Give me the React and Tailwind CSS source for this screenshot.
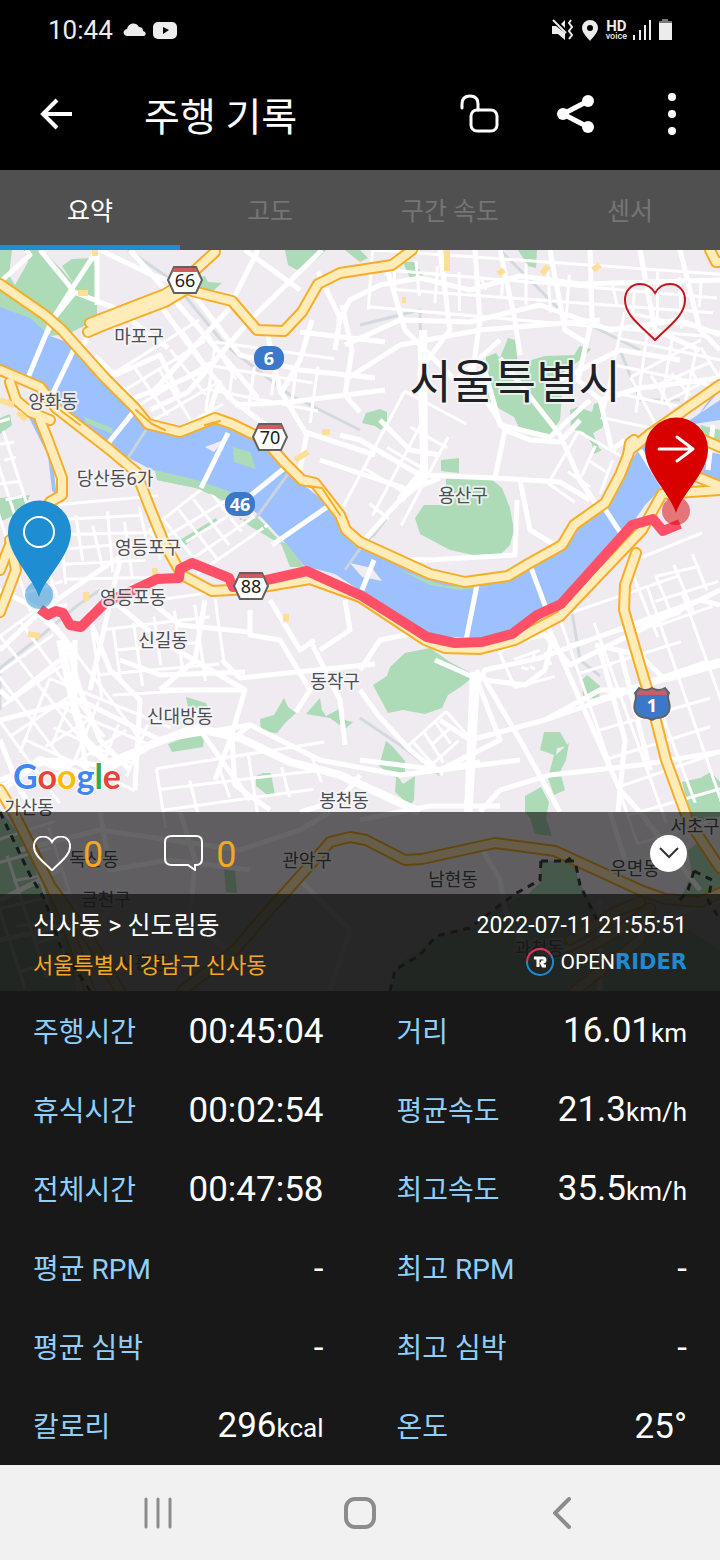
import { useState } from 'react';

const TABS = ['요약', '고도', '구간 속도', '센서'];

const STATS = [
  { label: '주행시간', value: '00:45:04' },
  { label: '거리', value: '16.01', unit: 'km' },
  { label: '휴식시간', value: '00:02:54' },
  { label: '평균속도', value: '21.3', unit: 'km/h' },
  { label: '전체시간', value: '00:47:58' },
  { label: '최고속도', value: '35.5', unit: 'km/h' },
  { label: '평균 RPM', value: '-' },
  { label: '최고 RPM', value: '-' },
  { label: '평균 심박', value: '-' },
  { label: '최고 심박', value: '-' },
  { label: '칼로리', value: '296', unit: 'kcal' },
  { label: '온도', value: '25°' },
];

const PLACES = [
  ['마포구', 139, 343],
  ['양화동', 53, 408],
  ['당산동6가', 115, 485],
  ['영등포구', 148, 554],
  ['영등포동', 133, 604],
  ['신길동', 163, 647],
  ['신대방동', 180, 723],
  ['동작구', 335, 688],
  ['봉천동', 344, 807],
  ['가산동', 29, 814],
  ['용산구', 463, 502],
  ['독산동', 94, 866],
  ['금천구', 106, 906],
  ['관악구', 307, 867],
  ['남현동', 453, 886],
  ['우면동', 635, 875],
  ['서초구', 695, 833],
  ['과천동', 539, 955],
  ['시흥동', 143, 969],
];

const PARKS = [
  'M0 250H12L9 275L15 285L28 262L24 250H42L62 270L76 286L97 292V318L84 326L68 334L50 336L0 310Z',
  'M62 266L72 259L92 258L97 270V296L76 287Z',
  'M192 279L205 276L208 282L222 283L214 290L200 291Z',
  'M285 250H326L318 258L305 268L297 270L288 265Z',
  'M345 250H360L368 258L360 262Z',
  'M403 262L414 262L423 275L415 281L409 276Z',
  'M518 250H537L536 268L528 266Z',
  'M486 357L496 353L500 358L508 338L515 340L518 364L545 356L574 355L580 346L591 349L580 360L564 372L560 420L548 437L520 430L514 417L498 408L486 400Z',
  'M570 410L578 407L592 412L594 404L600 402V410L606 417L602 428L593 433L599 448L602 450L594 454L592 444L584 432L571 429Z',
  'M362 423L366 413L380 409L387 412V421L381 430L375 426Z',
  'M441 460L459 458V473L441 471Z',
  'M446 478H490L502 488L510 508L514 530L510 545L500 555L482 557L450 550L420 534L415 518L424 505H446Z',
  'M373 685L387 676L390 667L405 653L430 648L450 662L475 675L462 686L448 695L442 708L425 714L403 710L388 713Z',
  'M582 680L587 675L600 686L599 700L583 696Z',
  'M544 732L560 732L568 746L557 748L556 755L569 743L566 760L560 772L565 790L554 795L548 778L554 755L540 750Z',
  'M525 796L541 787L549 802L546 818L552 836L535 834L530 818L525 812Z',
  'M386 741L392 746L405 761V775L396 774L403 784L415 776L414 800L410 806L395 792L396 778L379 766Z',
  'M682 782L700 778L711 772L720 782V816L700 832L690 812Z',
  'M260 719L274 715L284 698L288 707L296 713L286 722L277 733L261 732Z',
  'M306 714L320 698L322 710L326 716L341 708L345 720L353 722L345 729L330 718Z',
  'M186 697L206 703L210 712L200 708L188 707Z',
  'M168 744L205 730L203 747L172 752Z',
  'M256 776L263 773H271L275 795L266 794L256 786Z',
  'M155 470L196 478L234 493L240 520L258 518L280 541L270 538L248 525L222 500L196 488L157 480Z',
  'M180 540L216 518L218 523L184 546Z',
  'M0 418L10 414L12 425L0 434Z',
  'M0 498L30 495L24 510L0 522Z',
  'M280 541L290 545L304 567H290Z',
  'M700 425L720 430V443L704 436Z',
  'M0 810L22 838L52 880L72 940L76 991H0Z',
  'M224 868L235 870L237 893L226 892Z',
  'M539 861L574 860L578 880L600 920L690 930L720 950V991H390L398 965L430 942L440 934L480 926L498 906L528 894L541 882Z',
  'M692 874L688 850L705 838L720 862V895L682 896Z',
];

// local street grids: x, y, width, height, rotation, column step, row step
const GRIDS = [
  [112, 345, 120, 90, -32, 20, 20],
  [210, 350, 120, 70, 8, 21, 24],
  [370, 262, 350, 60, 4, 22, 19],
  [612, 322, 108, 110, 12, 26, 27],
  [0, 420, 40, 190, -18, 15, 19],
  [62, 500, 100, 80, -5, 16, 15],
  [160, 492, 100, 70, -38, 18, 16],
  [0, 620, 100, 170, -36, 25, 29],
  [95, 600, 130, 90, -8, 21, 22],
  [30, 700, 130, 80, 22, 27, 22],
  [160, 755, 170, 60, -9, 31, 21],
  [420, 720, 45, 50, 48, 15, 15],
  [595, 590, 125, 240, -19, 31, 30],
  [640, 545, 80, 80, -22, 21, 23],
  [505, 640, 50, 40, -24, 14, 13],
  [370, 400, 70, 130, 28, 30, 29],
  [560, 440, 50, 60, 30, 22, 20],
  [640, 355, 80, 60, -28, 19, 19],
  [0, 830, 80, 150, -18, 24, 22],
];

const STREETS = [
  'M0 282L30 255L26 250M40 250L68 284L74 292L115 308L150 335L168 348',
  'M97 250V305M52 320L75 284L96 252M75 292L54 318L30 370M92 330L54 396',
  'M100 250L150 274L172 282M130 250L190 318L235 370L258 398',
  'M160 305L200 360L232 400L286 440M190 290L240 355L300 370L375 378',
  'M258 250L228 310L150 395M322 250L250 320L188 392L150 410',
  'M245 250L300 290M318 272L340 318L335 350M268 336L280 390L305 432L375 455',
  'M280 395L300 360L312 320M235 405L290 402L385 390M200 440L220 380',
  'M95 356L115 375L160 355L180 398M128 400L170 385L205 370',
  'M300 332L385 342M342 305L352 350L345 395L360 412M307 432L300 470',
  'M338 322L350 300L380 285L420 278L470 290L520 276L580 284L720 280',
  'M345 345L400 320L470 322L540 305L610 330L680 320L720 335',
  'M385 262L405 330L455 380L500 340M440 250L450 330L420 370L423 470',
  'M475 250L480 320L470 390M500 250L515 320L520 355M550 250L565 330L585 342',
  'M590 250L592 318L578 380L600 400M640 250L655 330L700 350M680 250L700 330L720 350',
  'M345 380L400 345L480 330L600 320M420 340L425 480L400 500L360 545',
  'M500 358L560 435M482 360L500 425L550 437L590 400M560 435L580 480L600 510M486 400L505 430L495 478',
  'M340 435L360 440L420 475L495 478L560 482L590 500M505 430L530 440L560 442L580 420',
  'M600 400L640 388L720 378M600 400L612 450L625 440M560 380L620 350L680 360',
  'M380 420L410 450L440 455M320 460L410 490L440 478M520 480L530 530L555 545',
  'M370 558L430 560L515 555L517 500M515 640L545 635L570 665L720 590',
  'M360 670L380 640L420 632M0 590L40 610L66 640L80 690L100 740L130 770',
  'M0 650L42 610L100 570L130 550M25 600L75 650L72 700M60 660L10 700L0 690',
  'M90 620L110 670L140 700L135 790M0 780L50 760L100 765L160 740L250 725L320 760L400 775L520 760',
  'M130 585L180 625L250 632M100 590L160 640L245 690L230 740L215 780',
  'M205 600L195 660L160 690M250 610L250 635L280 640L310 690L296 712',
  'M345 600L350 630L320 650M270 600L300 650L315 640M310 640L340 700L345 745',
  'M222 660L240 678L375 664M245 672L160 675L120 660M160 690L245 690',
  'M200 730L250 800M250 725L232 740L235 785L270 810M360 775L340 800L300 812',
  'M435 660L480 680L485 670L540 658L700 600L720 605M478 670L470 812M482 675L520 740L560 812',
  'M485 680L525 685L545 670L552 640M475 675L500 740L440 770L360 760',
  'M440 720L470 740L545 720L720 660M360 690L378 715L410 750L435 770L480 762',
  'M545 620L580 700L620 790L640 812M600 650L625 740L618 812M620 650L650 770',
  'M500 790L550 775L640 765L720 752M595 645L640 655L665 680L720 665',
  'M500 790L480 812M360 820L430 806L500 806M545 720L600 690L640 690',
  'M0 740L20 790L35 812M75 640V700L90 790M120 560L90 690M0 720L80 700L160 740',
  'M20 850L100 830L240 850L300 830L330 812M100 812L110 870L170 860L250 870',
  'M180 812L195 860L190 920L240 960M120 890L80 960M300 880L350 930L330 991',
  'M480 845L500 880L505 910L530 960M610 812L625 860M640 812L700 890',
  'M530 960L720 900M600 900L600 991M0 900L60 870M0 940L90 920',
];

const BRIDGES = [
  'M52 320L27 380',
  'M76 345L51 397',
  'M135 410L106 446',
  'M228 433L201 488',
  'M292 462L245 500',
  'M330 505L272 545',
  'M374 560L362 590',
  'M477 585L466 640',
  'M530 565L546 608',
  'M603 506L620 532',
  'M640 450L664 488',
  'M713 425L708 470',
];

const HIGHWAYS = [
  'M0 284L45 315L62 330L105 378L135 408L148 424L180 432L215 418L232 424L265 440L284 462L302 480L315 483L340 515L346 530L360 542L430 574L465 582L508 576L528 564L562 545L574 525L605 503L620 475L630 450L650 434L720 385',
  'M628 455L630 443L634 440',
  'M88 332L102 326L165 302L185 290M90 323L165 294L178 286L215 252M192 291L232 301L257 330L284 331L302 312L318 284L340 273L392 265L412 250',
  'M0 370L40 387L56 408L110 450L136 472L150 508L165 545L182 575L212 591L250 589L310 579L360 597L425 640L445 648L480 649L515 640L560 616L642 530L662 494L720 490',
  'M690 474L720 486M650 434L690 434L720 447',
  'M10 382L16 400L30 412L50 420M40 420L48 440L62 478L62 495L50 502M10 540L16 570L0 612M14 535L0 570',
  'M636 553L625 585L624 610L640 665L652 705L666 760L688 820L720 868',
  'M710 250L716 262L720 262',
  'M0 790L15 815L40 865L60 905L76 950L90 991M52 888L90 940L120 991',
  'M182 991L235 950L265 915L310 865L330 842L350 837L366 840L405 860L422 859L495 843L555 851L640 890L665 899L700 902L720 893',
  'M570 940L615 912L640 902M575 955L620 930L650 908L640 940L575 991',
];

const RAILS = [
  'M128 250L172 280L225 345L290 395L360 430',
  'M0 710V668L36 640L78 605L100 590',
  'M360 325L420 310L422 400M424 480L400 500L374 535L360 545',
  'M360 718L400 745L440 775M500 250L560 310L640 350',
  'M570 600L580 660L600 676M620 350L640 400L680 400',
];

const JUNCTIONS = [
  'M95 256V250M78 293H88M286 622V614M447 250V271M498 274L504 270M542 274L548 266M593 270L600 265',
  'M402 300H406M28 634L40 636M86 601V592M155 575V568M322 432H330M295 460L308 452',
  'M0 400L14 405M18 412L26 420',
];

const ROUTE =
  'M40 609L48 615L56 611L63 613L70 625L81 627L98 610L106 602L136 589L157 579L179 578L180 569L192 563L229 578L233 587L262 581L307 571L362 596L427 637L455 643L482 642L512 634L537 615L561 604L632 525L653 519L663 531L680 524';

function Hexagon({ x, y, children }) {
  return (
    <g>
      <path
        d={`M${x - 17} ${y}L${x - 11} ${y - 13}H${x + 11}L${x + 17} ${y}L${x + 11} ${y + 13}H${x - 11}Z`}
        fill="#fff"
        stroke="#616161"
        strokeWidth="2"
      />
      <path d={`M${x - 11} ${y - 12}H${x + 11}L${x + 13} ${y - 8}H${x - 13}Z`} fill="#d35b5b" />
      <text x={x} y={y + 7} textAnchor="middle" fontSize="18" fill="#212121">
        {children}
      </text>
    </g>
  );
}

function RoadOval({ x, y, children }) {
  return (
    <g>
      <rect x={x - 15} y={y - 12} width="30" height="24" rx="11" fill="#3b78c9" />
      <text x={x} y={y + 7} textAnchor="middle" fontSize="18" fontWeight="700" fill="#fff">
        {children}
      </text>
    </g>
  );
}

function StreetGrid({ x, y, w, h, angle, dx, dy }) {
  const lines = [];
  for (let i = 0; i <= w; i += dx) lines.push(`M${x + i} ${y + ((i * 7) % 25)}L${x + i + ((i * 3) % 9)} ${y + h - ((i * 5) % 29)}`);
  for (let j = 0; j <= h; j += dy) lines.push(`M${x + ((j * 11) % 33)} ${y + j}L${x + w - ((j * 3) % 27)} ${y + j + ((j * 5) % 9)}`);
  return <path d={lines.join('')} transform={`rotate(${angle} ${x + w / 2} ${y + h / 2})`} />;
}

function RideMap() {
  return (
    <svg
      className="absolute inset-0 h-full w-full font-['Noto_Sans','Noto_Sans_CJK_KR',sans-serif]"
      viewBox="0 250 720 741"
      preserveAspectRatio="xMidYMid slice"
      role="img"
      aria-label="주행 경로 지도"
    >
      <rect y="250" width="720" height="741" fill="#efebf0" />
      <g fill="#addbb8">
        {PARKS.map((d) => (
          <path key={d} d={d} />
        ))}
      </g>
      <g fill="none" stroke="#d3dadd" strokeWidth="3">
        {RAILS.map((d) => (
          <path key={d} d={d} />
        ))}
      </g>
      <g fill="none" stroke="#fff" strokeWidth="3">
        {GRIDS.map(([x, y, w, h, angle, dx, dy]) => (
          <StreetGrid key={`${x}-${y}`} x={x} y={y} w={w} h={h} angle={angle} dx={dx} dy={dy} />
        ))}
      </g>
      <g fill="none" stroke="#fff" strokeWidth="5" strokeLinejoin="round">
        {STREETS.map((d) => (
          <path key={d} d={d} />
        ))}
      </g>
      <path
        d="M0 790L40 760L90 778L150 745L195 728L240 738L290 762L340 775L420 812M60 640L75 710L85 740L110 765M474 672L468 812M423 330L424 470L400 500"
        fill="none"
        stroke="#fff"
        strokeWidth="8"
        strokeLinejoin="round"
      />

      {/* Han river */}
      <path
        d="M0 307L30 318L50 336L75 345L105 380L135 412L150 424L180 434L215 424L250 436L275 455L300 482L330 506L345 530L365 546L430 578L465 586L505 580L530 566L562 548L575 530L608 504L625 470L640 448L655 436L720 390V420L668 428L706 452L720 450V482L700 474L670 480L645 505L632 524L562 600L535 612L510 632L480 638L430 636L362 592L335 574L304 566L290 548L262 518L238 497L196 481L152 470L110 448L80 425L56 400L40 385L0 366Z"
        fill="#9dc1ff"
      />
      <path d="M655 420L720 378V400L672 432ZM700 440L720 446V482L706 476Z" fill="#efebf0" />
      <path d="M708 452L720 454V482L700 476ZM695 420L712 396L720 384V390Z" fill="#9dc1ff" />
      <path d="M84 417L112 428L113 434L86 423ZM233 447L250 452L256 469L234 462Z" fill="#addbb8" />
      <path d="M155 470L196 480L234 493L228 501L196 488L157 480ZM258 520L282 545L270 538ZM400 570L445 586L490 587L460 590L430 585Z" fill="#addbb8" />
      <path d="M205 447L224 440L214 452ZM350 563L372 568L382 581L362 577Z" fill="#efebf0" />
      <path d="M30 415L50 455L54 490L62 496" fill="none" stroke="#9dc1ff" strokeWidth="4" />
      <g fill="none" stroke="#fff" strokeWidth="5">
        {BRIDGES.map((d) => (
          <path key={d} d={d} />
        ))}
      </g>
      <path d="M146 430L124 464M288 474L256 518M362 546L345 570" stroke="#c8d4dc" strokeWidth="3" fill="none" />

      <g fill="none" strokeLinejoin="round" strokeLinecap="round">
        <g stroke="#f6ae28" strokeWidth="12">
          {HIGHWAYS.map((d) => (
            <path key={d} d={d} />
          ))}
        </g>
        <g stroke="#ffecb9" strokeWidth="8">
          {HIGHWAYS.map((d) => (
            <path key={d} d={d} />
          ))}
        </g>
        <path d="M136 410L152 424L165 430M205 425L220 421M308 486L322 488L340 515M60 410L80 425" stroke="#f6ae28" strokeWidth="2" />
      </g>
      <g fill="none" stroke="#ffdf96" strokeWidth="6">
        {JUNCTIONS.map((d) => (
          <path key={d} d={d} />
        ))}
      </g>
      <g fill="none" stroke="#3c4043" strokeWidth="3" strokeDasharray="7 6">
        <path d="M0 812L30 875L45 900L60 945L90 991M541 861H575L580 885L597 920M541 861L540 880L515 894L500 905L470 928L436 936L420 955L395 970L390 991" />
        <path d="M694 871L688 890L680 900M694 871L712 880L708 900L720 920M565 862L572 857" />
      </g>

      <path d={ROUTE} fill="none" stroke="#ff5068" strokeWidth="10" strokeLinejoin="round" />

      <g fontSize="18" fill="#4b4f54" stroke="#f8f6f8" strokeOpacity="0.8" strokeWidth="4" strokeLinejoin="round" paintOrder="stroke" textAnchor="middle">
        {PLACES.map(([name, x, y]) => (
          <text key={name} x={x} y={y}>
            {name}
          </text>
        ))}
        <text x="515" y="398" fontSize="46" fill="#202124">
          서울특별시
        </text>
      </g>

      <Hexagon x={185} y={280}>66</Hexagon>
      <Hexagon x={270} y={437}>70</Hexagon>
      <Hexagon x={251} y={586}>88</Hexagon>
      <RoadOval x={269} y={358}>6</RoadOval>
      <RoadOval x={240} y={504}>46</RoadOval>
      <path d="M635 693L639 688Q646 692 652 688Q658 692 665 688L669 693Q667 696 669 702Q671 710 667 714Q664 718 656 718L652 720L648 718Q640 718 637 714Q633 710 635 702Q637 696 635 693Z" fill="#3b78c9" stroke="#616161" strokeWidth="2" />
      <path d="M637 693L640 689Q646 693 652 689Q658 693 664 689L667 693V695H637Z" fill="#c95f66" />
      <text x="652" y="712" textAnchor="middle" fontSize="18" fontWeight="700" fill="#fff">1</text>

      {/* start pin */}
      <circle cx="39" cy="595" r="14" fill="#1e8dd2" fillOpacity="0.5" />
      <path d="M39 597C33 577 8 556 8 532A31 31 0 0 1 71 532C71 556 45 577 39 597Z" fill="#1e8dd2" />
      <circle cx="39" cy="532" r="15" fill="none" stroke="#fff" strokeWidth="2" />

      {/* finish pin */}
      <circle cx="676" cy="511" r="14" fill="#d90000" fillOpacity="0.5" />
      <path d="M676 513C670 493 645 473 645 449A31 31 0 0 1 708 449C708 473 682 493 676 513Z" fill="#d90000" />
      <path d="M659 449H693M677 437L693 449L677 461" fill="none" stroke="#fff" strokeWidth="3" strokeLinecap="round" strokeLinejoin="round" />

      <text x="13" y="789" fontSize="34" fontWeight="700" stroke="#fff" strokeWidth="2" paintOrder="stroke" className="font-[Lato,sans-serif]">
        <tspan fill="#4285f4">G</tspan>
        <tspan fill="#ea4335">o</tspan>
        <tspan fill="#fbbc05">o</tspan>
        <tspan fill="#4285f4">g</tspan>
        <tspan fill="#34a853">l</tspan>
        <tspan fill="#ea4335">e</tspan>
      </text>
    </svg>
  );
}

function StatusBar() {
  return (
    <div className="flex h-[60px] items-center justify-between pr-12 pl-12 text-[#ececec]">
      <div className="flex items-center gap-2.5">
        <span className="text-[26px] leading-8">10:44</span>
        <svg width="56" height="20" viewBox="0 0 56 20" fill="currentColor">
          <path d="M4 16C0 16 -1 10 4 9C5 3 13 1 16 7C20 7 20 10 20 11C24 12 23 16 20 16Z" />
          <rect x="30" y="2" width="24" height="17" rx="5" />
          <path d="M40 7L46 10L40 14Z" fill="#000" />
        </svg>
      </div>
      <div className="flex items-center gap-2">
        <svg width="22" height="22" viewBox="0 0 22 22" fill="currentColor">
          <path d="M0 7H4L13 14V21L6 15H0ZM9 5L13 1V9Z" />
          <path d="M1 1L14 14" stroke="currentColor" strokeWidth="2" />
          <path d="M19 1L17 4L20 8L17 12L20 16L17 20" fill="none" stroke="currentColor" strokeWidth="2" />
        </svg>
        <svg width="16" height="21" viewBox="0 0 16 21" fill="currentColor">
          <path fillRule="evenodd" d="M8 0A8 8 0 0 1 16 8C16 13 10 18 8 21C6 18 0 13 0 8A8 8 0 0 1 8 0ZM8 5A3 3 0 0 0 8 11A3 3 0 0 0 8 5Z" />
        </svg>
        <div className="flex flex-col items-center">
          <span className="text-[15px] leading-3 font-bold">HD</span>
          <span className="font-['Roboto'] text-[9px] leading-2 font-medium">voice</span>
        </div>
        <svg className="-ml-0.5" width="18" height="20" viewBox="0 0 18 20" stroke="currentColor" strokeWidth="2">
          <path d="M1 15V20M7 10V20M12 5V20M17 0V20" />
        </svg>
        <svg width="13" height="22" viewBox="0 0 13 22">
          <path d="M0 5V2H3V0H9V2H13V5Z" fill="#777" />
          <path d="M0 4H13V21H0Z" fill="currentColor" />
        </svg>
      </div>
    </div>
  );
}

function AppBar() {
  return (
    <header className="flex h-[110px] items-center pr-11 pb-0.5 pl-9">
      <button aria-label="뒤로" className="p-1">
        <svg width="34" height="32" viewBox="0 0 34 32" fill="none" stroke="currentColor" strokeWidth="4">
          <path d="M32 16H3M17 2L3 16L17 30" />
        </svg>
      </button>
      <h1 className="ml-[66px] flex-1 pt-2 text-[39px] leading-12">주행 기록</h1>
      <div className="flex items-center gap-14">
        <button aria-label="잠금 해제">
          <svg width="40" height="40" viewBox="0 0 40 40" fill="none" stroke="currentColor" strokeWidth="3">
            <rect x="11" y="16" width="26" height="21" rx="6" />
            <path d="M18 16V10Q18 2 10 2Q2 2 2 10V14" strokeLinecap="round" />
          </svg>
        </button>
        <button aria-label="공유">
          <svg width="40" height="40" viewBox="0 0 40 40" fill="currentColor">
            <path d="M32 7L7 20L32 33" fill="none" stroke="currentColor" strokeWidth="5" />
            <circle cx="32" cy="7" r="6" />
            <circle cx="7" cy="20" r="6" />
            <circle cx="32" cy="33" r="6" />
          </svg>
        </button>
        <button aria-label="더보기" className="ml-4">
          <svg width="8" height="42" viewBox="0 0 8 42" fill="currentColor">
            <circle cx="4" cy="4" r="4" />
            <circle cx="4" cy="21" r="4" />
            <circle cx="4" cy="38" r="4" />
          </svg>
        </button>
      </div>
    </header>
  );
}

function Heart({ className }) {
  return (
    <svg className={className} viewBox="0 0 62 58" fill="none" stroke="currentColor">
      <path d="M31 10C27 3 21 1 16 1C7 1 1 8 1 17C1 32 16 42 31 57C46 42 61 32 61 17C61 8 55 1 46 1C41 1 35 3 31 10Z" strokeWidth="2" vectorEffect="non-scaling-stroke" />
    </svg>
  );
}

function OpenRiderLogo() {
  return (
    <div className="flex items-center text-[21px] leading-7">
      <svg className="mr-1.5" width="28" height="28" viewBox="0 0 28 28" fill="none" strokeWidth="2">
        <path d="M1 14A13 13 0 0 1 25 7" stroke="#d63a5d" />
        <path d="M25 7A13 13 0 1 1 1 14" stroke="#2089cf" />
        <path d="M8 10H17Q19 10 19 12Q19 14 17 14H15M15 14L17 18H20M12 10V19" stroke="#fff" strokeWidth="3" />
      </svg>
      OPEN<span className="font-['DejaVu_Sans'] font-bold text-[#2089cf]">RIDER</span>
    </div>
  );
}

export default function App() {
  const [tab, setTab] = useState(0);

  return (
    <div className="min-h-screen bg-black font-['Roboto','Noto_Sans_CJK_KR',sans-serif] text-white">
      <StatusBar />
      <AppBar />

      <nav className="grid h-20 grid-cols-4 bg-[#505050]">
        {TABS.map((name, i) => (
          <button
            key={name}
            onClick={() => setTab(i)}
            className={
              i === tab
                ? 'border-t-[5px] border-b-[5px] border-t-transparent border-b-[#1e8dd2] pt-1 text-[25px] leading-8'
                : 'pt-1 text-[25px] leading-8 text-[#757575]'
            }
          >
            {name}
          </button>
        ))}
      </nav>

      <section className="relative overflow-hidden">
        <RideMap />
        <div className="relative flex h-[562px] items-start justify-end pt-[33px] pr-[34px]">
          <button aria-label="좋아요" className="text-[#c8141c]">
            <Heart className="h-[58px] w-[62px]" />
          </button>
        </div>

        <div className="relative flex h-[82px] items-center bg-black/60 px-[33px] text-[36px] leading-10 text-[#f5a623]">
          <button className="flex items-center gap-3">
            <Heart className="h-[35px] w-[38px] text-white" />
            <span className="pt-1">0</span>
          </button>
          <button className="ml-[61px] flex items-center gap-3">
            <svg className="text-white" width="40" height="36" viewBox="0 0 40 36" fill="none" stroke="currentColor" strokeWidth="2">
              <path d="M8 1H32Q38 1 38 7V24Q38 30 32 30H31V35L24 30H8Q1 30 1 24V7Q1 1 8 1Z" />
            </svg>
            <span className="pt-1">0</span>
          </button>
          <button aria-label="접기" className="ml-auto flex size-[37px] items-center justify-center rounded-full bg-white">
            <svg width="20" height="12" viewBox="0 0 20 12" fill="none" stroke="#333" strokeWidth="2">
              <path d="M1 1L10 10L19 1" />
            </svg>
          </button>
        </div>

        <div className="relative flex h-[97px] justify-between bg-[#121212]/90 px-[33px] pt-3.5">
          <div>
            <p className="text-[25px] leading-9">신사동 &gt; 신도림동</p>
            <p className="pt-1 text-[22px] leading-9 text-[#f5a623]">서울특별시 강남구 신사동</p>
          </div>
          <div className="flex flex-col items-end">
            <p className="text-[23px] leading-9">2022-07-11 21:55:51</p>
            <div className="pt-1">
              <OpenRiderLogo />
            </div>
          </div>
        </div>
      </section>

      <dl className="grid grid-cols-2 gap-x-[73px] bg-[#181818] px-[33px]">
        {STATS.map(({ label, value, unit }) => (
          <div key={label} className="flex h-[79px] items-center justify-between pt-0.5">
            <dt className="pt-0.5 text-[28px] leading-10 text-[#8fd0fb]">{label}</dt>
            <dd className="text-[35px] leading-10">
              {value}
              {unit && <span className="text-[26px]">{unit}</span>}
            </dd>
          </div>
        ))}
      </dl>

      <footer className="grid h-[95px] grid-cols-3 place-items-center bg-[#f1f1f1] px-[57px] text-[#8c8c8c]">
        <button aria-label="최근 앱">
          <svg width="30" height="32" viewBox="0 0 30 32" stroke="currentColor" strokeWidth="3" strokeLinecap="round">
            <path d="M3 2V30M15 2V30M27 2V30" />
          </svg>
        </button>
        <button aria-label="홈">
          <svg width="32" height="32" viewBox="0 0 32 32" fill="none" stroke="currentColor" strokeWidth="4">
            <rect x="2" y="2" width="28" height="28" rx="9" />
          </svg>
        </button>
        <button aria-label="이전">
          <svg width="18" height="32" viewBox="0 0 18 32" fill="none" stroke="currentColor" strokeWidth="4" strokeLinecap="round">
            <path d="M16 2L2 16L16 30" />
          </svg>
        </button>
      </footer>
    </div>
  );
}
